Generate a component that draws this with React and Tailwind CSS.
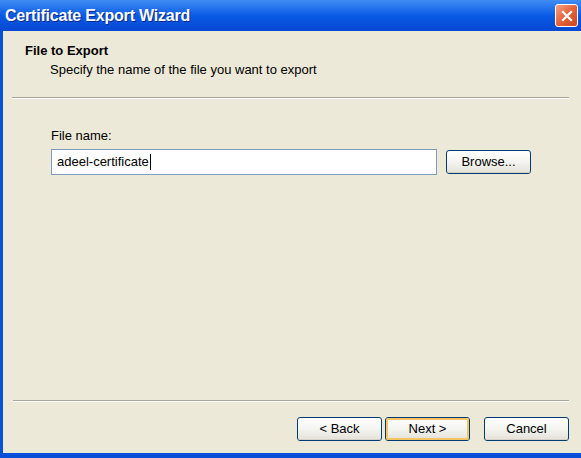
import React from 'react';

// XP風のボタン
function XpButton({ label, focused, className = '' }) {
  return (
    <button
      className={`h-[24px] w-[85px] rounded-[3px] border border-[#003C74] bg-gradient-to-b from-white via-[#F4F4F0] to-[#E3E1D8] text-[13px] text-black ${className}`}
    >
      <span
        className={`flex h-full w-full items-center justify-center rounded-[2px] ${focused ? 'shadow-[inset_0_0_0_2px_#F7C463]' : 'shadow-[inset_0_-1px_0_#D6D0C5]'}`}
      >
        {label}
      </span>
    </button>
  );
}

export default function App() {
  const font = { fontFamily: '"Liberation Sans", Arial, sans-serif' };

  return (
    <div className="flex h-[458px] w-[581px] flex-col overflow-hidden bg-[#0A4FD8]" style={font}>
      {/* タイトルバー */}
      <div className="flex h-[31px] shrink-0 items-center justify-between bg-gradient-to-b from-[#3F8CF3] via-[#0A5AE6] to-[#0848D2] pl-[5px] pr-[3px]">
        <span className="text-[16px] font-bold tracking-[-0.2px] text-white [text-shadow:1px_1px_0_#0A2A8A]">
          Certificate Export Wizard
        </span>
        <div className="flex h-[23px] w-[23px] items-center justify-center rounded-[3px] border border-white bg-gradient-to-br from-[#F4A080] via-[#E5633A] to-[#CC4520]">
          <svg width="12" height="12" viewBox="0 0 12 12">
            <path d="M2 2 L10 10 M10 2 L2 10" stroke="white" strokeWidth="2.2" strokeLinecap="square" />
          </svg>
        </div>
      </div>

      {/* 本体 */}
      <div className="ml-[3px] mb-[5px] flex flex-1 flex-col bg-[#ECE9D8] text-[13px] text-black">
        {/* ヘッダー */}
        <div className="pl-[22px] pt-[12px]">
          <div className="font-bold leading-[16px]">File to Export</div>
          <div className="mt-[3px] pl-[25px] leading-[16px]">Specify the name of the file you want to export</div>
        </div>
        <div className="ml-[9px] mr-[12px] mt-[19px] border-t border-b border-t-[#ACA899] border-b-white" />

        {/* ファイル名 */}
        <div className="pl-[48px] pt-[29px]">
          <div className="leading-[16px]">File name:</div>
          <div className="mt-[5px] flex items-center">
            <div className="flex h-[26px] w-[386px] items-center border border-[#7F9DB9] bg-white pl-[5px]">
              adeel-certificate
              <span className="ml-[1px] inline-block h-[16px] w-[1px] bg-black" />
            </div>
            <XpButton label="Browse..." className="ml-[9px]" />
          </div>
        </div>

        <div className="flex-1" />

        {/* 下部 */}
        <div className="ml-[10px] mr-[12px] border-t border-b border-t-[#ACA899] border-b-white" />
        <div className="flex justify-end gap-[3px] pr-[12px] pt-[15px] pb-[12px]">
          <XpButton label="< Back" />
          <XpButton label="Next >" focused />
          <XpButton label="Cancel" className="ml-[11px]" />
        </div>
      </div>
    </div>
  );
}
